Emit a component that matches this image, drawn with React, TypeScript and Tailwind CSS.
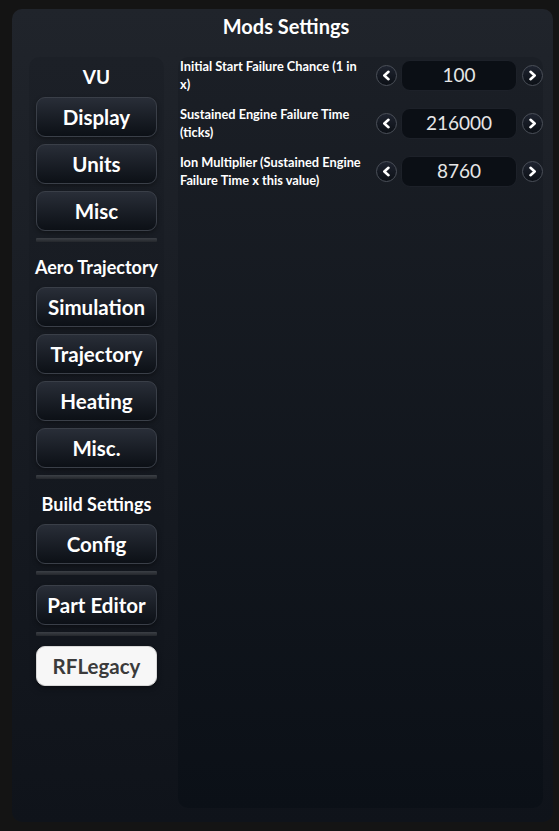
import React, { useState } from "react";

interface Setting {
  id: string;
  label: string;
  value: number;
}

const initialSettings: Setting[] = [
  { id: "startFailure", label: "Initial Start Failure Chance (1 in x)", value: 100 },
  { id: "sustainedFailure", label: "Sustained Engine Failure Time (ticks)", value: 216000 },
  { id: "ionMultiplier", label: "Ion Multiplier (Sustained Engine Failure Time x this value)", value: 8760 },
];

type NavItem = { type: "header"; label: string } | { type: "button"; label: string } | { type: "sep" };

const nav: NavItem[] = [
  { type: "header", label: "VU" },
  { type: "button", label: "Display" },
  { type: "button", label: "Units" },
  { type: "button", label: "Misc" },
  { type: "sep" },
  { type: "header", label: "Aero Trajectory" },
  { type: "button", label: "Simulation" },
  { type: "button", label: "Trajectory" },
  { type: "button", label: "Heating" },
  { type: "button", label: "Misc." },
  { type: "sep" },
  { type: "header", label: "Build Settings" },
  { type: "button", label: "Config" },
  { type: "sep" },
  { type: "button", label: "Part Editor" },
  { type: "sep" },
  { type: "button", label: "RFLegacy" },
];

function Arrow({ dir, onClick }: { dir: "left" | "right"; onClick: () => void }) {
  return (
    <button
      onClick={onClick}
      className="w-[21px] h-[21px] shrink-0 rounded-full border border-[#4a4f58] bg-gradient-to-b from-[#1f2430] to-[#0c1016] flex items-center justify-center"
    >
      <svg width="11" height="11" viewBox="0 0 10 10">
        <polyline
          points={dir === "left" ? "6.8,1.6 3,5 6.8,8.4" : "3.2,1.6 7,5 3.2,8.4"}
          fill="none"
          stroke="#ffffff"
          strokeWidth="2.3"
          strokeLinecap="round"
          strokeLinejoin="round"
        />
      </svg>
    </button>
  );
}

export default function App() {
  const [settings, setSettings] = useState(initialSettings);
  const [active, setActive] = useState("RFLegacy");

  const step = (id: string, delta: number) => {
    setSettings((prev) => prev.map((s) => (s.id === id ? { ...s, value: Math.max(0, s.value + delta) } : s)));
  };

  return (
    <div className="w-full h-[831px] bg-[#141414] pt-[9px] pb-[9px] pl-[12px] pr-[6px] font-['Lato',sans-serif]">
      <div className="h-full rounded-[10px] bg-gradient-to-b from-[#20242b] to-[#0f131a] flex flex-col pl-[17px] pr-[10px] pb-[14px]">
        {/* Title */}
        <div className="h-[34px] flex items-center justify-center text-white font-bold text-[20px]">
          Mods Settings
        </div>

        <div className="flex-1 flex gap-[14px] mt-[14px] min-h-0">
          {/* Sidebar */}
          <div className="w-[135px] self-start rounded-[10px] bg-gradient-to-b from-[#1c2027] to-[#11151c] px-[7px] pb-[10px] flex flex-col">
            {nav.map((item, i) => {
              if (item.type === "header") {
                return (
                  <div
                    key={i}
                    className={`${i === 0 ? "" : "mt-[5px]"} h-[40px] flex items-center justify-center text-white font-bold whitespace-nowrap ${item.label === "VU" ? "text-[19px]" : "text-[18px]"}`}
                  >
                    {item.label}
                  </div>
                );
              }
              if (item.type === "sep") {
                return (
                  <div
                    key={i}
                    className="h-[4px] mt-[7px] rounded-[1px] bg-gradient-to-b from-[#3c4046] to-[#24272c]"
                  />
                );
              }
              const isActive = active === item.label;
              const prev = nav[i - 1];
              const top = prev && prev.type === "sep" ? "mt-[10px]" : prev && prev.type === "button" ? "mt-[7px]" : "";
              return (
                <button
                  key={i}
                  onClick={() => setActive(item.label)}
                  className={`${top} h-[40px] rounded-[9px] border text-[20.5px] font-bold whitespace-nowrap shadow-[0_2px_4px_rgba(0,0,0,0.35)] ${
                    isActive
                      ? "bg-[#f7f7f7] border-[#d8d8d8] text-[#3b3b3b]"
                      : "bg-gradient-to-b from-[#292e38] to-[#0c1016] border-[#3a3f48] text-white"
                  }`}
                >
                  {item.label}
                </button>
              );
            })}
          </div>

          {/* Settings content */}
          <div className="flex-1 rounded-[10px] bg-gradient-to-b from-[#1b1f26] to-[#0b1017] pl-[2px] flex flex-col gap-[12px]">
            {settings.map((s) => (
              <div key={s.id} className="h-[36px] flex items-center">
                <div className="w-[196px] pr-[10px] text-white font-bold text-[12.8px] leading-[18px]">
                  {s.label}
                </div>
                <Arrow dir="left" onClick={() => step(s.id, -1)} />
                <div className="ml-[4px] w-[116px] h-[31px] rounded-[9px] bg-[#0b0f15] border border-[#1d2129] flex items-center justify-center text-[#e6e6e6] text-[19px]">
                  {s.value}
                </div>
                <div className="ml-[5px]">
                  <Arrow dir="right" onClick={() => step(s.id, 1)} />
                </div>
              </div>
            ))}
          </div>
        </div>
      </div>
    </div>
  );
}
